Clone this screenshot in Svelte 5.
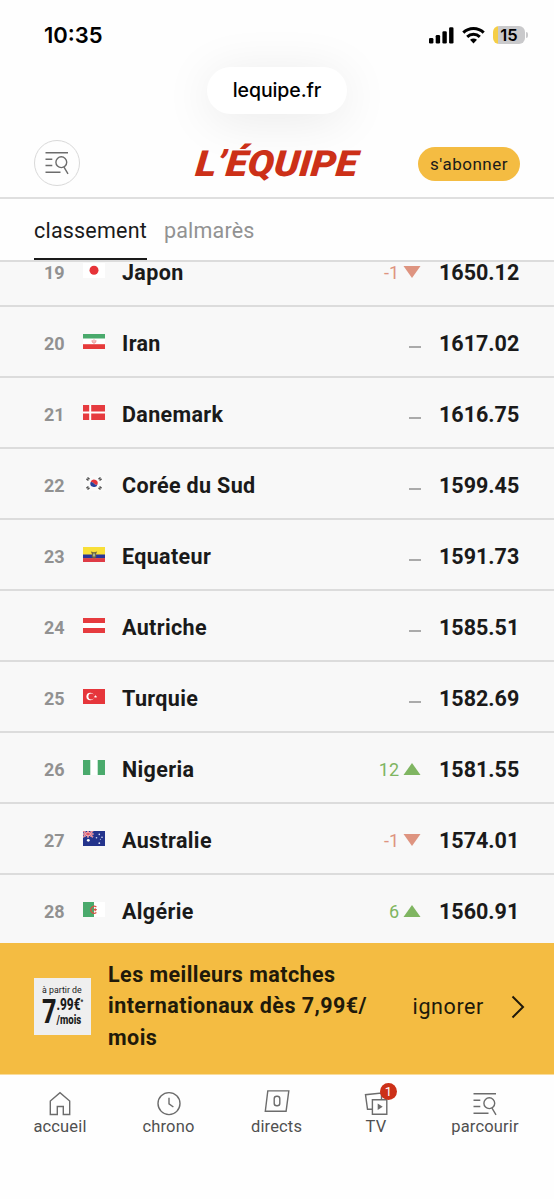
<script lang="ts">
	type Team = {
		rank: number;
		code: string;
		name: string;
		move: number;
		points: string;
	};

	type Tab = { id: string; label: string; width: number };

	const teams: Team[] = [
		{ rank: 19, code: 'jp', name: 'Japon', move: -1, points: '1650.12' },
		{ rank: 20, code: 'ir', name: 'Iran', move: 0, points: '1617.02' },
		{ rank: 21, code: 'dk', name: 'Danemark', move: 0, points: '1616.75' },
		{ rank: 22, code: 'kr', name: 'Corée du Sud', move: 0, points: '1599.45' },
		{ rank: 23, code: 'ec', name: 'Equateur', move: 0, points: '1591.73' },
		{ rank: 24, code: 'at', name: 'Autriche', move: 0, points: '1585.51' },
		{ rank: 25, code: 'tr', name: 'Turquie', move: 0, points: '1582.69' },
		{ rank: 26, code: 'ng', name: 'Nigeria', move: 12, points: '1581.55' },
		{ rank: 27, code: 'au', name: 'Australie', move: -1, points: '1574.01' },
		{ rank: 28, code: 'dz', name: 'Algérie', move: 6, points: '1560.91' }
	];

	const navItems: Tab[] = [
		{ id: 'home', label: 'accueil', width: 52 },
		{ id: 'clock', label: 'chrono', width: 51 },
		{ id: 'live', label: 'directs', width: 51 },
		{ id: 'tv', label: 'TV', width: 34 },
		{ id: 'search', label: 'parcourir', width: 70 }
	];

	let active = $state('classement');
</script>

{#snippet searchIcon()}
	<svg class="icon" width="24" height="24" viewBox="0 0 24 24">
		<path d="M.5 1.7H23M.5 8.2h6.8M.5 14.5h6.8M.5 21.2h15M19 16.2l4 6.6" />
		<circle cx="16.3" cy="11.2" r="5.4" />
	</svg>
{/snippet}

{#snippet flag(code: string)}
	<svg class="flag" width="22" height="15" viewBox="0 0 22 15">
		{#if code === 'jp'}
			<rect width="22" height="15" fill="#fff" />
			<circle cx="11" cy="7.3" r="4.5" fill="#e63338" />
		{:else if code === 'ir'}
			<rect width="22" height="15" fill="#fff" />
			<rect width="22" height="4.5" fill="#4aaa6c" />
			<rect y="10.2" width="22" height="4.8" fill="#e63b3b" />
			<path d="M11 5.2v4.4M9 6.2q-.6 2.4 2 3 2.6-.6 2-3M9.9 6v2.6M12.1 6v2.6" fill="none" stroke="#e98a8a" stroke-width=".7" />
		{:else if code === 'dk'}
			<rect width="22" height="15" fill="#e63b3f" />
			<path d="M7.2 0v15M0 7.5h22" stroke="#fff" stroke-width="2" />
		{:else if code === 'kr'}
			<rect width="22" height="15" fill="#fafafa" />
			<path d="M7.5 6.2a3.6 3.6 0 0 1 7 2.2q-1.8 1.3-3.5-.9t-3.5-1.3" fill="#e2343c" />
			<path d="M7.5 6.2q1.8-.9 3.5 1.3t3.5.9a3.6 3.6 0 0 1-7-2.2" fill="#27409a" />
			<path d="M4 4.2l2-2.5M4 10.8l2 2.5M18 4.2l-2-2.5M18 10.8l-2 2.5" stroke="#555" stroke-width="2.6" stroke-dasharray="1.4 .3" />
		{:else if code === 'ec'}
			<rect width="22" height="15" fill="#f8df38" />
			<rect y="7.5" width="22" height="3.9" fill="#27349a" />
			<rect y="11.2" width="22" height="3.8" fill="#df3b46" />
			<path d="M7.8 4.4l3.2.8 3.2-.8-1.3 2.8.4 2.7-2.3 1.7-2.3-1.7.4-2.7z" fill="#71683f" />
			<ellipse cx="11" cy="8" rx="1.2" ry="1.8" fill="#a3b69b" />
		{:else if code === 'at'}
			<rect width="22" height="15" fill="#e63b3f" />
			<rect y="5" width="22" height="5" fill="#fff" />
		{:else if code === 'tr'}
			<rect width="22" height="15" fill="#e6363b" />
			<circle cx="7.2" cy="7.5" r="3.8" fill="#fff" />
			<circle cx="8.4" cy="7.5" r="3" fill="#e6363b" />
			<path d="M12.5 5.8l.4 1.1 1.2.1-.9.8.3 1.2-1-.7-1 .7.3-1.2-.9-.8 1.2-.1z" fill="#fff" />
		{:else if code === 'ng'}
			<rect width="22" height="15" fill="#fff" />
			<path d="M0 0h7.3v15H0zM14.7 0H22v15h-7.3z" fill="#4aaa6c" />
		{:else if code === 'au'}
			<rect width="22" height="15" fill="#24348c" />
			<path d="M0 0l10 6M10 0L0 6M5 0v6.5M0 3h10.5" stroke="#f5d5dc" stroke-width="1.7" />
			<path d="M0 0l10 6M10 0L0 6M5 0v6.5M0 3h10.5" stroke="#dc4a58" stroke-width=".8" />
			<circle cx="5.3" cy="9.3" r="1.4" fill="#fff" />
			<g fill="#dce0f4">
				<circle cx="16.3" cy="3.4" r=".8" />
				<circle cx="13.5" cy="6.8" r=".8" />
				<circle cx="19" cy="6.2" r=".8" />
				<circle cx="17.4" cy="8.2" r=".5" />
				<circle cx="16.3" cy="12.2" r=".9" />
			</g>
		{:else}
			<rect width="22" height="15" fill="#fff" />
			<rect width="11" height="15" fill="#4aaa6c" />
			<path d="M13.4 10.5a3.5 3.5 0 1 1 0-5.6M10.4 7.7h3.4M12.2 6.2v3" fill="none" stroke="#d95042" stroke-width="1.2" />
		{/if}
	</svg>
{/snippet}

{#snippet navIcon(id: string)}
	{#if id === 'home'}
		<svg class="icon" width="24" height="26" viewBox="0 0 24 26">
			<path d="M2.3 24.5V11L12 2.7 21.7 11v13.5h-6.4v-8h-6v8z" />
		</svg>
	{:else if id === 'clock'}
		<svg class="icon" width="24" height="26" viewBox="0 0 24 26">
			<circle cx="12" cy="13.6" r="11" />
			<path d="M12 7.8v6l4.4 3.2" />
		</svg>
	{:else if id === 'live'}
		<svg class="icon" width="26" height="26" viewBox="0 0 26 26">
			<path d="M3.8.9h21l-2.7 20.3H1.3z" />
			<rect x="10.2" y="6.2" width="5.6" height="9.6" rx="2.5" />
		</svg>
	{:else if id === 'tv'}
		<svg class="icon" width="24" height="26" viewBox="0 0 24 26">
			<path d="M17.5 9V3L1.5 4.7l2 14.5H8" />
			<path d="M8.4 9.8h14.4v14.4H8.4z" />
			<path class="solid" d="M13.7 13.5v6.6l5-3.3z" />
		</svg>
		<span class="badge">1</span>
	{:else}
		{@render searchIcon()}
	{/if}
{/snippet}

<div class="screen">
	<div class="top">
		<div class="status">
			<span class="time">10:35</span>
			<div class="indicators">
				<svg width="25" height="17" viewBox="0 0 25 17">
					<rect x="0" y="11" width="4.4" height="5.5" rx="1.3" />
					<rect x="6.7" y="8" width="4.4" height="8.5" rx="1.3" />
					<rect x="13.4" y="4.3" width="4.4" height="12.2" rx="1.3" />
					<rect x="20.1" y="0.3" width="4.4" height="16.2" rx="1.3" />
				</svg>
				<svg width="23" height="17" viewBox="0 0 23 17">
					<path d="M1.3 5.7a14.7 14.7 0 0 1 20.4 0M5.2 9.8a9.2 9.2 0 0 1 12.6 0" fill="none" stroke="#000" stroke-width="3" />
					<path d="M8 12.8q3.5-2.8 7 0l-3.5 3.7z" />
				</svg>
				<div class="battery"><span>15</span></div>
			</div>
		</div>
		<div class="address">lequipe.fr</div>
	</div>

	<header>
		<button class="round" aria-label="parcourir">{@render searchIcon()}</button>
		<span class="logo">L’ÉQUIPE</span>
		<button class="subscribe">s'abonner</button>
	</header>

	<div class="tabs">
		{#each ['classement', 'palmarès'] as tab}
			<button class:active={active === tab} onclick={() => (active = tab)}>{tab}</button>
		{/each}
	</div>

	<div class="list">
		{#each teams as team (team.rank)}
			<div class="row">
				<span class="rank">{team.rank}</span>
				{@render flag(team.code)}
				<span class="name">{team.name}</span>
				<span class="move" class:up={team.move > 0} class:down={team.move < 0}>
					{#if team.move === 0}
						<i class="dash"></i>
					{:else}
						{team.move}
						<svg width="18" height="12" viewBox="0 0 18 12">
							<path d={team.move > 0 ? 'M9 0l8.5 12H.5z' : 'M.5 0h17L9 12z'} />
						</svg>
					{/if}
				</span>
				<span class="points">{team.points}</span>
			</div>
		{/each}
	</div>

	<aside class="banner">
		<div class="price">
			<span class="from">à partir de</span>
			<div class="amount">
				<span class="seven">7</span>
				<span class="rest"><span class="cents">.99€<sup>*</sup></span><span>/mois</span></span>
			</div>
		</div>
		<p>Les meilleurs matches<br />internationaux dès 7,99€/<br />mois</p>
		<span class="ignore">ignorer</span>
		<svg class="chevron" width="14" height="24" viewBox="0 0 14 24">
			<path d="M1.5 1.5L12 12 1.5 22.5" fill="none" stroke="#20190a" stroke-width="2" />
		</svg>
	</aside>

	<nav>
		{#each navItems as item (item.id)}
			<div class="item" style:width="{item.width}px">
				<div class="glyph">{@render navIcon(item.id)}</div>
				<span>{item.label}</span>
			</div>
		{/each}
	</nav>
</div>

<style>
	:global(body) {
		background: #fefefe;
	}

	.screen {
		display: flex;
		flex-direction: column;
		width: 554px;
		height: 1199px;
		overflow: hidden;
		background: #fefefe;
		color: #1a1a1a;
		font-family: Roboto, 'Liberation Sans', sans-serif;
	}

	button {
		padding: 0;
		border: none;
		background: none;
		font-family: inherit;
		color: inherit;
	}

	.top {
		display: flex;
		flex-direction: column;
		align-items: center;
		height: 128px;
		color: #000;
		font-family: Inter, sans-serif;
	}

	.status {
		display: flex;
		justify-content: space-between;
		align-items: center;
		box-sizing: border-box;
		width: 100%;
		height: 67px;
		padding: 3px 29px 0 44px;
	}

	.time {
		font-size: 22px;
		font-weight: 600;
	}

	.indicators {
		display: flex;
		align-items: center;
		gap: 8px;
	}

	.battery {
		display: flex;
		align-items: center;
		justify-content: center;
		position: relative;
		width: 32px;
		height: 18px;
		border-radius: 6px;
		background: linear-gradient(90deg, #f5ce46 5px, #c9c9cb 5px);
		font-size: 16.5px;
		font-weight: 600;

		&::after {
			content: '';
			position: absolute;
			right: -3px;
			top: 6px;
			width: 2px;
			height: 6px;
			border-radius: 0 2px 2px 0;
			background: #c9c9cb;
		}
	}

	.address {
		width: 140px;
		height: 47px;
		border-radius: 24px;
		background: #fff;
		box-shadow: 0 6px 50px rgba(0, 0, 0, 0.085);
		font-size: 19.5px;
		font-weight: 500;
		letter-spacing: -0.1px;
		line-height: 47px;
		text-align: center;
	}

	header {
		display: flex;
		align-items: center;
		justify-content: space-between;
		box-sizing: border-box;
		height: 71px;
		padding: 0 34px;
		border-bottom: 2px solid #dfdfdf;
	}

	.icon {
		fill: none;
		stroke: #6c6c6c;
		stroke-width: 1.4;
	}

	.icon .solid {
		fill: #6c6c6c;
		stroke: none;
	}

	.round {
		display: flex;
		align-items: center;
		justify-content: center;
		box-sizing: border-box;
		width: 46px;
		height: 46px;
		border: 1.5px solid #d9d9d9;
		border-radius: 50%;
	}

	.logo {
		margin-left: 116px;
		margin-right: auto;
		padding-top: 2px;
		color: #cc3018;
		font-size: 36px;
		font-style: italic;
		font-weight: 900;
		transform: scaleX(1.1) skewX(-5deg);
		transform-origin: left;
	}

	.subscribe {
		width: 102px;
		height: 34px;
		margin-top: 3px;
		border-radius: 17px;
		background: #f4bc42;
		font-size: 17px;
		letter-spacing: 0.5px;
		line-height: 32px;
	}

	.tabs {
		display: flex;
		gap: 17px;
		box-sizing: border-box;
		height: 63px;
		padding: 0 34px;
		border-bottom: 2px solid #dcdcdc;
	}

	.tabs button {
		height: 61px;
		padding-top: 3px;
		border-bottom: 2px solid transparent;
		font-size: 21.5px;
		letter-spacing: 0.2px;
		color: #929292;

		&.active {
			color: #1a1a1a;
			border-bottom-color: #1a1a1a;
		}
	}

	.list {
		flex: none;
		height: 681px;
		overflow: hidden;
		background: #f8f8f8;
	}

	.row {
		display: flex;
		align-items: center;
		box-sizing: border-box;
		height: 71px;
		padding: 3px 35px 0 44px;
		border-bottom: 2px solid #dcdcdc;

		&:first-child {
			margin-top: -26px;
		}
	}

	.rank {
		width: 39px;
		color: #919191;
		font-size: 18px;
		font-weight: 700;
	}

	.flag {
		margin-bottom: 3px;
	}

	.name {
		flex: 1;
		margin-left: 17px;
		font-size: 21.5px;
		font-weight: 700;
		letter-spacing: 0.35px;
	}

	.move {
		display: flex;
		align-items: center;
		gap: 4px;
		margin-right: 18px;
		font-size: 18px;

		&.up {
			color: #7fb561;
			fill: #7fb561;
		}

		&.down {
			color: #de9480;
			fill: #de9480;
		}
	}

	.dash {
		width: 12px;
		height: 2px;
		margin-top: 7px;
		background: #aaa;
	}

	.points {
		width: 80px;
		font-size: 21.5px;
		font-weight: 700;
	}

	.banner {
		display: flex;
		align-items: center;
		box-sizing: border-box;
		flex: none;
		height: 132px;
		padding: 0 29px 4px 34px;
		border-bottom: 1px solid #f9dc9c;
		background: #f4bc42;
		color: #20190a;
	}

	.price {
		box-sizing: border-box;
		width: 57px;
		height: 57px;
		padding: 7px 0 0 8px;
		background: #efefef;
		color: #1a1a1a;
	}

	.from {
		display: block;
		font-size: 8.8px;
		line-height: 10px;
		white-space: nowrap;
	}

	.amount {
		display: flex;
		line-height: 14px;
		font-weight: 800;
		transform: scaleX(0.74);
		transform-origin: left;
	}

	.seven {
		font-size: 34px;
		line-height: 33px;
		width: 20px;
	}

	.rest {
		display: flex;
		flex-direction: column;
		padding-top: 2px;
		font-size: 13px;
	}

	.cents {
		font-size: 16px;
		line-height: 16px;
	}

	sup {
		font-size: 8px;
		line-height: 0;
		vertical-align: 6px;
	}

	.banner p {
		flex: 1;
		margin: 0 0 1px 17px;
		font-size: 21.5px;
		font-weight: 700;
		line-height: 31.3px;
		letter-spacing: 0.45px;
		white-space: nowrap;
	}

	.ignore {
		margin-right: 27px;
		font-size: 21.5px;
		letter-spacing: 0.6px;
	}

	nav {
		display: flex;
		justify-content: space-between;
		padding: 14px 34px 0;
	}

	.item {
		display: flex;
		flex-direction: column;
		align-items: center;
		gap: 1px;
		color: #505050;
		font-size: 16.5px;
		letter-spacing: 0.15px;
		line-height: 20px;
		white-space: nowrap;
	}

	.glyph {
		display: flex;
		align-items: flex-end;
		position: relative;
		height: 27px;
	}

	.badge {
		position: absolute;
		left: 16px;
		top: -6px;
		width: 17px;
		height: 17px;
		border-radius: 50%;
		background: #cc3018;
		color: #fff;
		font-size: 13px;
		letter-spacing: 0;
		line-height: 17px;
		text-align: center;
	}
</style>
